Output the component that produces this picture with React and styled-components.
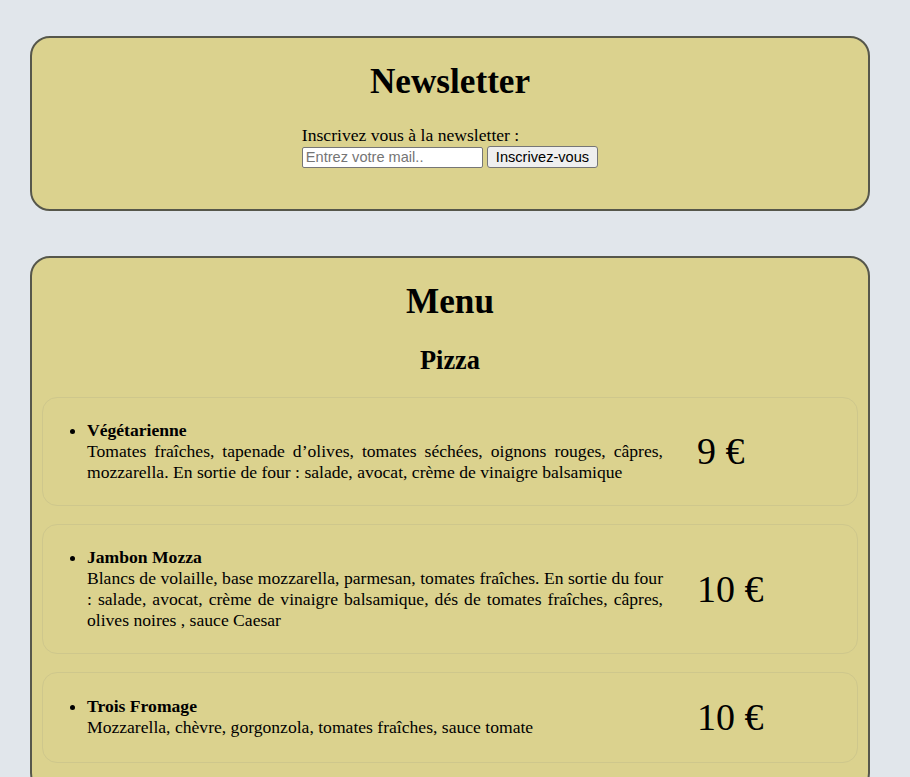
import React from "react";
import styled, { createGlobalStyle } from "styled-components";

const GlobalStyle = createGlobalStyle`
  body {
    margin: 0;
    background-color: #e1e6eb;
    font-family: "Liberation Serif", "Times New Roman", serif;
    font-size: 17.6px;
    color: #000;
  }
`;

const Page = styled.div`
  padding: 36px 40px 0 30px;
  display: flex;
  flex-direction: column;
  gap: 45px;
`;

const Card = styled.section`
  background-color: #dbd28e;
  border: 2px solid #56574b;
  border-radius: 20px;
  padding: 0 10px ${(props) => props.bottom || "0"};
  text-align: center;
`;

const Title = styled.h1`
  font-size: 35.2px;
  line-height: 40px;
  margin: 24px 0 23px;
`;

const SubTitle = styled.h2`
  font-size: 26.4px;
  line-height: 30px;
  margin: 23px 0 22px;
`;

const Form = styled.form`
  display: inline-flex;
  flex-direction: column;
  align-items: flex-start;
  line-height: 21px;
  margin-bottom: 41px;
  & .row {
    display: flex;
    gap: 4px;
    align-items: center;
  }
`;

const MailInput = styled.input`
  box-sizing: border-box;
  width: 181px;
  height: 21px;
  padding: 1px 3px;
  border: 1px solid #767676;
  border-radius: 2px;
  background: #fff;
  font-family: "Liberation Sans", Arial, sans-serif;
  font-size: 14.6px;
  &::placeholder {
    color: #757575;
  }
`;

const SubmitButton = styled.button`
  box-sizing: border-box;
  height: 22px;
  padding: 0 8px;
  border: 1px solid #767676;
  border-radius: 3px;
  background: #efefef;
  color: #000;
  font-family: "Liberation Sans", Arial, sans-serif;
  font-size: 14.6px;
`;

const Item = styled.div`
  display: flex;
  align-items: center;
  border: 1px solid #cec78c;
  border-radius: 15px;
  padding: 4px 4px 5px;
  margin-bottom: 18px;
  text-align: left;
  & ul {
    flex: 0 0 616px;
    box-sizing: border-box;
    margin: 17.6px 0;
    padding-left: 40px;
    line-height: 21px;
  }
  & li p {
    margin: 0;
    text-align: justify;
  }
`;

const Price = styled.div`
  margin: 19px 0 19px 34px;
  font-size: 38px;
  line-height: 42px;
`;

const pizzas = [
  {
    name: "Végétarienne",
    desc: "Tomates fraîches, tapenade d’olives, tomates séchées, oignons rouges, câpres, mozzarella. En sortie de four : salade, avocat, crème de vinaigre balsamique",
    price: "9 €",
  },
  {
    name: "Jambon Mozza",
    desc: "Blancs de volaille, base mozzarella, parmesan, tomates fraîches. En sortie du four : salade, avocat, crème de vinaigre balsamique, dés de tomates fraîches, câpres, olives noires , sauce Caesar",
    price: "10 €",
  },
  {
    name: "Trois Fromage",
    desc: "Mozzarella, chèvre, gorgonzola, tomates fraîches, sauce tomate",
    price: "10 €",
  },
];

const App = () => {
  return (
    <>
      <GlobalStyle />
      <Page>
        <Card>
          <Title>Newsletter</Title>
          <Form onSubmit={(e) => e.preventDefault()}>
            <label htmlFor="mail">Inscrivez vous à la newsletter :</label>
            <div className="row">
              <MailInput id="mail" type="email" placeholder="Entrez votre mail.." />
              <SubmitButton type="submit">Inscrivez-vous</SubmitButton>
            </div>
          </Form>
        </Card>
        <Card bottom="10px">
          <Title>Menu</Title>
          <SubTitle>Pizza</SubTitle>
          {pizzas.map((pizza) => (
            <Item key={pizza.name}>
              <ul>
                <li>
                  <strong>{pizza.name}</strong>
                  <p>{pizza.desc}</p>
                </li>
              </ul>
              <Price>{pizza.price}</Price>
            </Item>
          ))}
        </Card>
      </Page>
    </>
  );
};

export default App;
